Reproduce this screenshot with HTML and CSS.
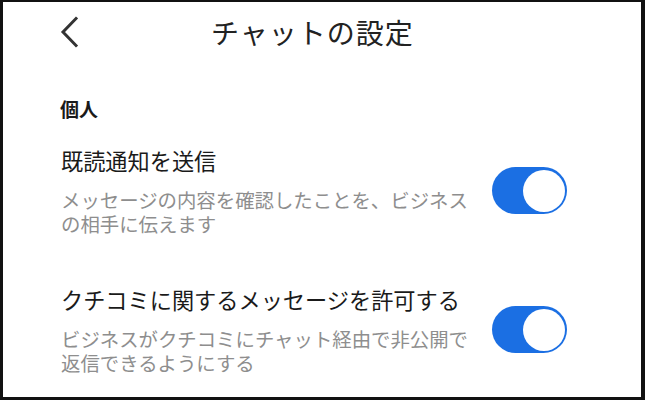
FILE: index.html
```html
<!DOCTYPE html>
<html lang="ja">
<head>
<meta charset="utf-8">
<link rel="stylesheet" href="styles.css">
</head>
<body>
<div class="frame">
  <header class="header">
    <svg class="back" width="20" height="32" viewBox="0 0 20 32" aria-hidden="true">
      <path d="M18 2.5 L5 16 L18 29.5" fill="none" stroke="#333" stroke-width="3" stroke-linecap="square" stroke-linejoin="miter"/>
    </svg>
    <h1 class="title">チャットの設定</h1>
  </header>
  <main class="content">
    <h2 class="section">個人</h2>
    <div class="row row-first">
      <div class="text">
        <div class="row-title">既読通知を送信</div>
        <div class="row-desc">メッセージの内容を確認したことを、ビジネスの相手に伝えます</div>
      </div>
      <div class="toggle"><span class="knob"></span></div>
    </div>
    <div class="row row-second">
      <div class="text">
        <div class="row-title">クチコミに関するメッセージを許可する</div>
        <div class="row-desc">ビジネスがクチコミにチャット経由で非公開で返信できるようにする</div>
      </div>
      <div class="toggle"><span class="knob"></span></div>
    </div>
  </main>
</div>
</body>
</html>
```
FILE: styles.css
```css
html, body {
  margin: 0;
  padding: 0;
  background: #fff;
}
body {
  font-family: "Noto Sans CJK JP", "Noto Sans", sans-serif;
}
.frame {
  width: 645px;
  height: 400px;
  box-sizing: border-box;
  border-style: solid;
  border-color: #111;
  border-width: 2px 4px 3px 3px;
  overflow: hidden;
  background: #fff;
}
.header {
  height: 60px;
  display: flex;
  align-items: center;
}
.back {
  display: block;
  margin-left: 55px;
  flex: none;
}
.title {
  margin: 0 0 0 133px;
  font-size: 28px;
  line-height: 28px;
  letter-spacing: 1px;
  font-weight: 400;
  color: #222;
}
.content {
  padding: 0 0 0 58px;
}
.section {
  margin: 37px 0 0 -1px;
  font-size: 19px;
  line-height: 19px;
  font-weight: 700;
  color: #1a1a1a;
}
.row {
  display: flex;
  align-items: center;
}
.row-first {
  margin-top: 31px;
}
.row-second {
  margin-top: 52px;
}
.text {
  flex: 0 0 412px;
}
.row-title {
  font-size: 22.2px;
  line-height: 22px;
  color: #1a1a1a;
}
.row-desc {
  margin-top: 17px;
  font-size: 19.4px;
  line-height: 24px;
  color: #8e8e8e;
}
.toggle {
  flex: none;
  margin-left: 19px;
  margin-top: -4px;
  width: 75px;
  height: 47px;
  border-radius: 24px;
  background: #1b6fe3;
  display: flex;
  align-items: center;
  justify-content: flex-end;
  padding-right: 2.5px;
  box-sizing: border-box;
}
.knob {
  width: 42px;
  height: 42px;
  border-radius: 50%;
  background: #fff;
}
```
